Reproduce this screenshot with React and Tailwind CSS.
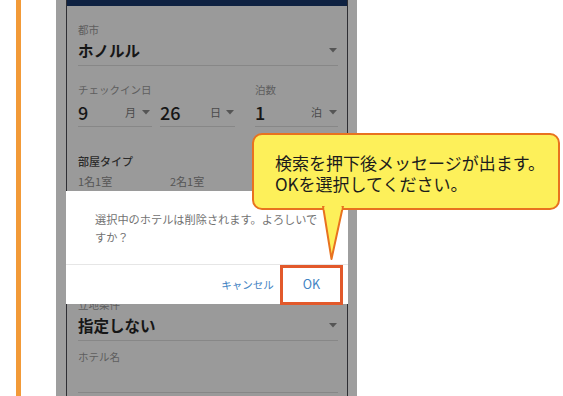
const Caret = ({ className = '' }) => (
  <svg width="8" height="5" viewBox="0 0 8 5" className={className}>
    <polygon points="0,0 8,0 4,4.5" fill="#555" />
  </svg>
);

const Field = ({ label, value }) => (
  <div>
    <div className="text-[10.5px] leading-[14px] text-[#5e5e5e]">{label}</div>
    <div className="flex items-center justify-between border-b border-[#878787] pb-[4px] mt-[2px]">
      <span className="text-[15.5px] leading-[22px] font-bold text-[#161616]">{value}</span>
      <Caret className="mr-[1px]" />
    </div>
  </div>
);

const App = () => {
  return (
    <div className="relative w-[563px] h-[396px] overflow-hidden bg-white flex font-['Noto_Sans_CJK_JP','Noto_Sans',sans-serif]">
      {/* side accent */}
      <div className="ml-[16px] w-[5px] h-full bg-[#f29a38]" />

      {/* phone screen, dimmed by the dialog overlay */}
      <div className="relative ml-[35px] w-[301px] h-full bg-[#9e9e9e] pl-[10px] pr-[9px]">
        <div className="h-full border-x border-[#2e2e33] bg-[#9a9a9a]">
          <div className="h-[6px] bg-[#0f2242]" />
          <div className="pl-[11px] pr-[9px]">
            <div className="mt-[17px]">
              <Field label="都市" value="ホノルル" />
            </div>

            <div className="mt-[17px] flex text-[10.5px] leading-[14px] text-[#5e5e5e]">
              <div className="w-[177px]">チェックイン日</div>
              <div>泊数</div>
            </div>
            <div className="mt-[3px] flex items-end">
              <div className="w-[74px] flex items-center border-b border-[#878787] pb-[2px]">
                <span className="text-[18px] leading-[24px] font-medium text-[#161616]">9</span>
                <span className="ml-auto text-[11px] text-[#4a4a4a]">月</span>
                <Caret className="ml-[6px] mr-[2px]" />
              </div>
              <div className="ml-[8px] w-[75px] flex items-center border-b border-[#878787] pb-[2px]">
                <span className="text-[18px] leading-[24px] font-medium text-[#161616]">26</span>
                <span className="ml-auto text-[11px] text-[#4a4a4a]">日</span>
                <Caret className="ml-[5px] mr-[1px]" />
              </div>
              <div className="ml-[20px] flex-1 flex items-center border-b border-[#878787] pb-[2px]">
                <span className="text-[18px] leading-[24px] font-medium text-[#161616]">1</span>
                <span className="ml-auto text-[11px] text-[#4a4a4a]">泊</span>
                <Caret className="ml-[7px] mr-[1px]" />
              </div>
            </div>

            <div className="mt-[26px] text-[11px] leading-[16px] font-medium text-[#2a2a2a]">部屋タイプ</div>
            <div className="mt-[4px] flex text-[11px] leading-[16px] text-[#555]">
              <span className="w-[92px]">1名1室</span>
              <span>2名1室</span>
            </div>

            <div className="mt-[109px]">
              <Field label="立地条件" value="指定しない" />
            </div>

            <div className="mt-[9px] text-[10.5px] leading-[14px] text-[#5e5e5e]">ホテル名</div>
            <div className="h-[29px] border-b border-[#878787]" />
          </div>
        </div>

        {/* confirm dialog */}
        <div className="absolute left-[10px] top-[191px] w-[282px] h-[113px] bg-white flex flex-col">
          <p className="pt-[19px] pl-[29px] pr-[8px] text-[11.2px] leading-[18px] text-[#727272]">
            選択中のホテルは削除されます。よろしいで<br />すか？
          </p>
          <div className="mt-auto h-[40px] border-t border-[#e6e6e6] flex items-center justify-end pr-[28px]">
            <button className="text-[10.5px] text-[#3f83c3]">キャンセル</button>
            <button className="ml-[29px] text-[12.5px] text-[#3f83c3]">OK</button>
          </div>
        </div>

        {/* highlight around OK */}
        <div className="absolute left-[224px] top-[265px] w-[63px] h-[40px] border-[3px] border-[#e2592b]" />
      </div>

      {/* callout */}
      <div className="absolute left-[252px] top-[133px] w-[308px] h-[77px] rounded-[10px] border-2 border-[#e8721f] bg-[#fdf05a] pl-[21px] pt-[17px] text-[17px] leading-[21px] text-[#1c1c1c]">
        <div>検索を押下後メッセージが出ます。</div>
        <div>OKを選択してください。</div>
      </div>
      <svg className="absolute left-[320px] top-[206px]" width="26" height="56" viewBox="0 0 26 56">
        <polygon points="3,0 23,0 11.5,53" fill="#fdf05a" stroke="#e8721f" strokeWidth="2" strokeLinejoin="round" />
        <rect x="4.5" y="0" width="17" height="4" fill="#fdf05a" />
      </svg>
    </div>
  );
};

export default App;
